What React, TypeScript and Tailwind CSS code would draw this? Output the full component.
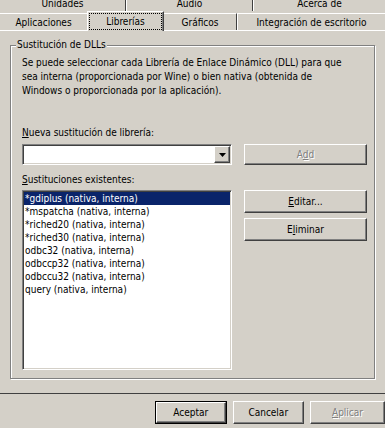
import React from 'react';

const raised =
  'border border-t-white border-l-white border-r-[#404040] border-b-[#404040] shadow-[inset_-1px_-1px_#808080] bg-[#d4d0c8]';
const sunken =
  'border border-t-[#808080] border-l-[#808080] border-r-white border-b-white shadow-[inset_1px_1px_#404040,inset_-1px_-1px_#d4d0c8] bg-white';

const overrides = [
  '*gdiplus (nativa, interna)',
  '*mspatcha (nativa, interna)',
  '*riched20 (nativa, interna)',
  '*riched30 (nativa, interna)',
  'odbc32 (nativa, interna)',
  'odbccp32 (nativa, interna)',
  'odbccu32 (nativa, interna)',
  'query (nativa, interna)',
];

const App = () => {
  return (
    <div className="w-[385px] h-[428px] overflow-hidden bg-[#d4d0c8] text-black text-[10px] leading-[13px] font-['DejaVu_Sans_Condensed','Liberation_Sans',sans-serif] select-none">
      {/* back row of tabs */}
      <div className="flex h-[11px] overflow-hidden">
        <div className="w-[126px] border-r border-r-[#404040] text-center">
          <div className="-mt-[3px]">Unidades</div>
        </div>
        <div className="w-[127px] border-l border-l-white border-r border-r-[#404040] text-center">
          <div className="-mt-[3px]">Audio</div>
        </div>
        <div className="flex-1 border-l border-l-white text-center">
          <div className="-mt-[3px]">Acerca de</div>
        </div>
      </div>

      {/* front row of tabs */}
      <div className="flex h-[19px]">
        <div className="w-[87px] h-[17px] mt-[2px] border-t border-t-white text-center pt-[2px]">Aplicaciones</div>
        <div className="relative z-10 w-[77px] h-[20px] bg-[#d4d0c8] border-l border-t border-l-white border-t-white border-r border-r-[#404040] shadow-[inset_-1px_0_#808080]">
          <div className="mx-[1px] mt-[1px] h-[17px] border border-dotted border-black text-center pt-[1px]">Librerías</div>
        </div>
        <div className="w-[73px] h-[17px] mt-[2px] border-t border-t-white border-r border-r-[#404040] text-center pt-[2px]">Gráficos</div>
        <div className="flex-1 h-[17px] mt-[2px] border-t border-l border-t-white border-l-white text-center pt-[2px]">Integración de escritorio</div>
      </div>

      {/* tab page */}
      <div className="h-[364px] border-t border-t-white border-b border-b-[#404040] pt-[14px] pl-[10px]">
        <div className="w-[365px] h-[334px] border border-[#808080] shadow-[inset_1px_1px_#fff,1px_1px_#fff] pl-[11px]">
          <div className="-mt-[8px] -ml-[6px] w-fit px-[1px] bg-[#d4d0c8]">Sustitución de DLLs</div>
          <p className="mt-[5px] leading-[14px] whitespace-nowrap">
            Se puede seleccionar cada Librería de Enlace Dinámico (DLL) para que
            <br />
            sea interna (proporcionada por Wine) o bien nativa (obtenida de
            <br />
            Windows o proporcionada por la aplicación).
          </p>

          <div className="mt-[28px]">
            <span className="underline">N</span>ueva sustitución de librería:
          </div>
          <div className="mt-[5px] flex gap-[12px]">
            <div className={`${sunken} w-[210px] h-[21px] flex justify-end p-[1px]`}>
              <div className={`${raised} w-[16px] h-[17px] flex items-center justify-center`}>
                <svg width="7" height="4" viewBox="0 0 7 4">
                  <path d="M0 0h7L3.5 4z" fill="#000" />
                </svg>
              </div>
            </div>
            <div className={`${raised} w-[123px] h-[21px] flex items-center justify-center text-[#808080] [text-shadow:1px_1px_0_#fff]`}>
              <span>
                A<span className="underline">d</span>d
              </span>
            </div>
          </div>

          <div className="mt-[8px]">
            <span className="underline">S</span>ustituciones existentes:
          </div>
          <div className="mt-[4px] flex gap-[12px]">
            <div className={`${sunken} w-[210px] h-[180px] p-[1px]`}>
              {overrides.map((o, i) => (
                <div
                  key={o}
                  className={`h-[13px] pl-[1px] whitespace-nowrap ${i === 0 ? 'bg-[#0a246a] text-white' : ''}`}
                >
                  {o}
                </div>
              ))}
            </div>
            <div className="flex flex-col gap-[5px]">
              <div className={`${raised} w-[123px] h-[23px] flex items-center justify-center`}>
                <span>
                  <span className="underline">E</span>ditar...
                </span>
              </div>
              <div className={`${raised} w-[123px] h-[23px] flex items-center justify-center`}>
                <span>
                  E<span className="underline">l</span>iminar
                </span>
              </div>
            </div>
          </div>
        </div>
      </div>

      {/* dialog buttons */}
      <div className="flex gap-[6px] pl-[155px] pt-[7px]">
        <div className="w-[75px] h-[23px] border border-black">
          <div className={`${raised} w-full h-full flex items-center justify-center`}>Aceptar</div>
        </div>
        <div className={`${raised} w-[75px] h-[23px] flex items-center justify-center`}>Cancelar</div>
        <div className={`${raised} w-[75px] h-[23px] shrink-0 flex items-center justify-center text-[#808080] [text-shadow:1px_1px_0_#fff]`}>
          <span>
            <span className="underline">A</span>plicar
          </span>
        </div>
      </div>
    </div>
  );
};

export default App;
